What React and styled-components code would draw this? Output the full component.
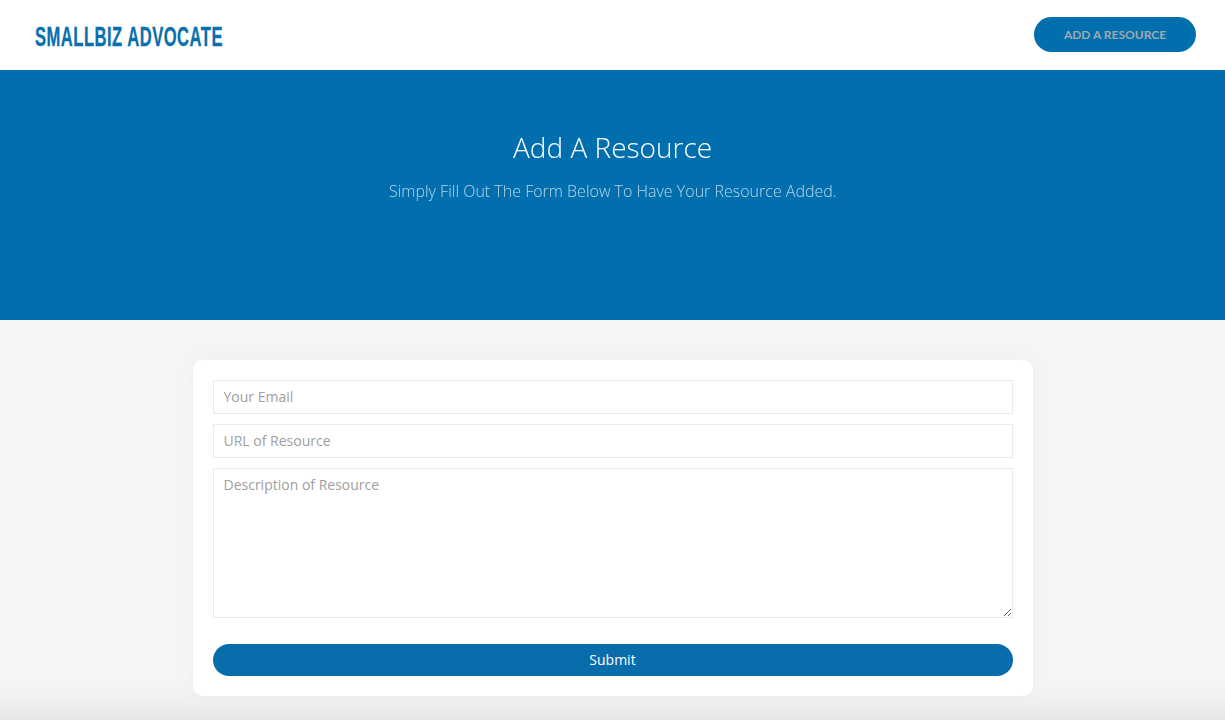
import React from "react";
import styled, { createGlobalStyle } from "styled-components";

const Global = createGlobalStyle`
  html, body { margin: 0; padding: 0; height: 100%; overflow: hidden; background: #f5f5f5; }
  * { box-sizing: border-box; }
  body { font-family: "Open Sans", "Liberation Sans", sans-serif; }
  ::placeholder { color: #a0a0a0; opacity: 1; }
`;

const Page = styled.div`
  height: 720px;
  overflow: hidden;
  display: flex;
  flex-direction: column;
  background: #f5f5f5;
`;

const Header = styled.header`
  height: 70px;
  flex: none;
  background: #fff;
  display: flex;
  align-items: center;
  justify-content: space-between;
  padding: 0 29px 0 35px;
`;

const Logo = styled.a`
  display: block;
  margin-top: 3px;
  font-family: "Liberation Sans", sans-serif;
  font-weight: 700;
  font-size: 28px;
  line-height: 30px;
  letter-spacing: 0.8px;
  color: #0a6fad;
  white-space: nowrap;
  transform: scaleX(0.593);
  transform-origin: left center;
  -webkit-text-stroke: 0.3px #0a6fad;
`;

const HeaderButton = styled.a`
  width: 162px;
  height: 35px;
  margin-top: -2px;
  border-radius: 18px;
  background: #016fae;
  color: #a2a8ad;
  font-family: Lato, "Liberation Sans", sans-serif;
  font-weight: 700;
  font-size: 12px;
  display: flex;
  align-items: center;
  justify-content: center;
`;

const Hero = styled.section`
  height: 250px;
  flex: none;
  background: #016fae;
  display: flex;
  flex-direction: column;
  align-items: center;
  padding-top: 56px;
`;

const Title = styled.h1`
  margin: 0;
  font-size: 28px;
  line-height: 42px;
  font-weight: 300;
  color: #fff;
  will-change: transform;
`;

const Subtitle = styled.p`
  margin: 12px 0 0;
  font-size: 16px;
  line-height: 22px;
  font-weight: 300;
  color: rgba(255, 255, 255, 0.7);
  will-change: transform;
`;

const Main = styled.main`
  flex: none;
  display: flex;
  justify-content: center;
  padding: 40px 0 24px;
  position: relative;
  z-index: 1;
`;

const Card = styled.form`
  width: 840px;
  background: #fff;
  border-radius: 10px;
  padding: 20px;
  display: flex;
  flex-direction: column;
  gap: 10px;
  box-shadow: 0 0 20px rgba(0, 0, 0, 0.03);
`;

const field = `
  width: 100%;
  display: block;
  border: 1px solid #ebebeb;
  background: #fff;
  font-family: "Open Sans", "Liberation Sans", sans-serif;
  font-size: 14px;
  color: #333;
  outline: none;
  border-radius: 0;
`;

const Input = styled.input`
  ${field}
  height: 34px;
  padding: 0 10px 2px;
`;

const TextArea = styled.textarea`
  ${field}
  height: 150px;
  padding: 6px 10px 0;
  resize: vertical;
  line-height: 19px;
`;

const Submit = styled.button`
  margin-top: 16px;
  height: 32px;
  border: 0;
  border-radius: 16px;
  background: #0a6dab;
  color: #fff;
  font-family: "Open Sans", "Liberation Sans", sans-serif;
  font-size: 14px;
  padding: 0 0 2px;
`;

const Footer = styled.footer`
  height: 60px;
  flex: none;
  margin: 0 -80px;
  background: #e6e6e6;
  box-shadow: 0 0 40px rgba(0, 0, 0, 0.13);
`;

export default function App() {
  return (
    <>
      <Global />
      <Page>
        <Header>
          <Logo>SMALLBIZ ADVOCATE</Logo>
          <HeaderButton>ADD A RESOURCE</HeaderButton>
        </Header>
        <Hero>
          <Title>Add A Resource</Title>
          <Subtitle>Simply Fill Out The Form Below To Have Your Resource Added.</Subtitle>
        </Hero>
        <Main>
          <Card onSubmit={(e) => e.preventDefault()}>
            <Input placeholder="Your Email" />
            <Input placeholder="URL of Resource" />
            <TextArea placeholder="Description of Resource" />
            <Submit>Submit</Submit>
          </Card>
        </Main>
        <Footer />
      </Page>
    </>
  );
}
